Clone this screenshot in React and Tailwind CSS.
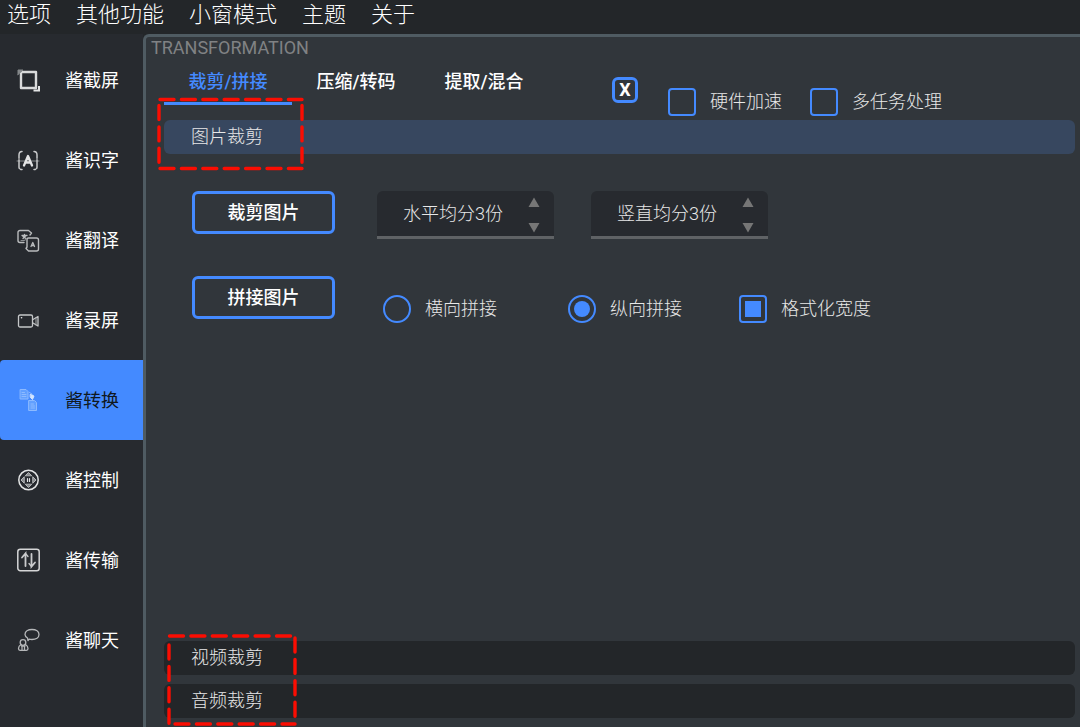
import { useState } from 'react';

const MENUS = ['选项', '其他功能', '小窗模式', '主题', '关于'];

function Icon({ children }) {
  return (
    <svg
      viewBox="0 0 24 24"
      className="size-6 shrink-0"
      fill="none"
      stroke="#e3e4e5"
      strokeWidth="1.5"
      strokeLinecap="round"
      strokeLinejoin="round"
      aria-hidden="true"
    >
      {children}
    </svg>
  );
}

const ScreenshotIcon = () => (
  <Icon>
    <rect x="5" y="4" width="15" height="16" strokeWidth="2.4" stroke="#d9dadb" />
    <path d="M2 6.500V2h5L2 6.500Z" stroke="#85888b" fill="#85888b" strokeWidth="1" />
    <path d="M17.500 22.500h5.500V18" strokeWidth="2" strokeLinecap="butt" strokeLinejoin="miter" />
  </Icon>
);

const OcrIcon = () => (
  <Icon>
    <path d="M1 13h22" stroke="#85888b" strokeWidth="1" />
    <path d="M6 3.500C4 3.500 3 4.500 3 7v12c0 1.500.8 2.500 3 2.500" strokeDasharray="8.500 1.500" stroke="#c9cacc" strokeWidth="1.500" />
    <path d="M18 3.500c2 0 3 1 3 3.500v12c0 1.500-.8 2.500-3 2.500" strokeDasharray="8.500 1.500" stroke="#c9cacc" strokeWidth="1.500" />
    <path d="M8 17.500 12 8l4 9.500M9.500 14.500h5" strokeWidth="2.300" />
  </Icon>
);

const TranslateIcon = () => (
  <Icon>
    <g strokeWidth="1.400" stroke="#b9bbbd">
      <path d="M8 14.500H4A2 2 0 0 1 2 12.500V4.500A2 2 0 0 1 4 2.500h8.500L15.500 5l-1.500 2" />
      <path d="M12.500 10h8a2 2 0 0 1 2 2v9a2 2 0 0 1-2 2h-8l-2.500-2.500 1-1.500v-7.500a1.500 1.500 0 0 1 1.500-1.500Z" />
      <path d="M6 7.500h5M8.500 6.500v1M7 10.500l3-3M7 8.500l3 2M15 18.500l1.800-4 1.700 4M16 17.500h1.500" strokeWidth="1.300" />
      <path d="M5 12.500h3.500M9 11.500l2.500 1.500" stroke="#8d9093" strokeWidth="1" />
    </g>
  </Icon>
);

const RecordIcon = () => (
  <Icon>
    <rect x="2.500" y="7" width="14" height="12" rx="1.500" stroke="#c5c7c9" strokeWidth="1.300" />
    <path d="m17 11.500 5-3v9.500L17 15" stroke="#c5c7c9" strokeWidth="1.300" />
    <path d="M20 9.500v7.500" stroke="#a9abad" strokeWidth="1" />
    <path d="M5.500 9.700h.1" strokeWidth="1.600" />
  </Icon>
);

const ConvertIcon = () => (
  <Icon>
    <g stroke="#8dbaff" strokeWidth="1">
      <path d="M4.500 1.500h5.500l2 2V11H4.500ZM6 4.500h2.500M6 6.500h4M6 8.500h4" fill="#62a0ff" />
      <path d="M13 12.500h5.500l2 2V22.500H13ZM15 16h2.500M15 18h3.500M15 20h3.500" fill="#62a0ff" />
      <path d="M13.500 4.500 16 6v2" />
      <path d="M14.500 6.500 18 8l-1.500 3.500-2-2Z" fill="#d3e5ff" stroke="#d3e5ff" />
    </g>
  </Icon>
);

const ControlIcon = () => (
  <Icon>
    <circle cx="12.500" cy="12" r="9.700" strokeWidth="1.500" />
    <path d="M9.500 7.500 12.500 4.500l3 3ZM9.500 16.500l3 3 3-3ZM8 9l-3 3L8 15ZM17 9l3 3-3 3Z" strokeWidth="1" stroke="#b5b7b9" fill="#898c8f" />
    <path d="M11.500 10.500v3M13.500 10.500v3" strokeWidth="1.200" />
  </Icon>
);

const TransferIcon = () => (
  <Icon>
    <rect x="1.800" y="1.300" width="21.400" height="21.400" rx="2.500" strokeWidth="1.500" stroke="#d5d6d7" />
    <path d="m6 9.500 3.500-4V18M19 14.500l-3.500 4V6" stroke="#c9cacc" strokeWidth="1.800" strokeLinejoin="miter" />
    <path d="m9.500 5.500 2.500 3M15.500 18.500l-2.500-3" stroke="#c9cacc" strokeWidth="1.300" />
  </Icon>
);

const ChatIcon = () => (
  <Icon>
    <g stroke="#b5b7b9" strokeWidth="1.300">
      <path d="M11.500 10c-1.500-1-2.500-2-2.500-3.500C9 3.500 12 1.500 16 1.500s7 2 7 5-3 5-7 5c-1 0-2-.100-2.800-.4L12 12.500Z" />
      <circle cx="7" cy="14.500" r="2.800" />
      <path d="M5 16.500c-1.500 1-2.500 2.500-2.500 4 0 1 .5 1.800 1.500 1.800h6.500c1 0 1.500-.8 1.500-1.800 0-1.500-1-3-2.500-4M6 19v2.500M8.500 19v2.500M5.500 18h3.500" />
    </g>
  </Icon>
);

const NAV = [
  { label: '酱截屏', icon: ScreenshotIcon },
  { label: '酱识字', icon: OcrIcon },
  { label: '酱翻译', icon: TranslateIcon },
  { label: '酱录屏', icon: RecordIcon },
  { label: '酱转换', icon: ConvertIcon },
  { label: '酱控制', icon: ControlIcon },
  { label: '酱传输', icon: TransferIcon },
  { label: '酱聊天', icon: ChatIcon },
];

const TABS = ['裁剪/拼接', '压缩/转码', '提取/混合'];

function CheckBox({ label, defaultChecked }) {
  return (
    <label className="flex items-center gap-3.5 whitespace-nowrap">
      <input
        type="checkbox"
        defaultChecked={defaultChecked}
        className="grid size-7 shrink-0 appearance-none place-items-center rounded border-2 border-[#448aff] before:size-4 before:bg-[#448aff] not-checked:before:hidden"
      />
      {label}
    </label>
  );
}

function Radio({ label, defaultChecked }) {
  return (
    <label className="flex items-center gap-3.5 whitespace-nowrap">
      <input
        type="radio"
        name="direction"
        defaultChecked={defaultChecked}
        className="grid size-7 shrink-0 appearance-none place-items-center rounded-full border-2 border-[#448aff] before:size-4 before:rounded-full before:bg-[#448aff] not-checked:before:hidden"
      />
      {label}
    </label>
  );
}

function SplitCount({ prefix }) {
  const [count, setCount] = useState(3);
  return (
    <div className="flex h-12 w-[177px] items-center rounded-t-md border-b-3 border-[#5f6265] bg-[#272a2f] pr-3 pl-[26px]">
      <input
        type="text"
        readOnly
        aria-label={prefix}
        value={`${prefix}${count}份`}
        className="w-0 grow bg-transparent outline-none"
      />
      <div className="flex flex-col gap-4 pt-0.5">
        <button type="button" aria-label="增加" className="block" onClick={() => setCount(count + 1)}>
          <svg viewBox="0 0 12 10" className="h-2.5 w-4 fill-[#767676]" aria-hidden="true">
            <path d="M6 0.500 11.500 10H0.500Z" />
          </svg>
        </button>
        <button type="button" aria-label="减少" className="block" onClick={() => setCount(Math.max(1, count - 1))}>
          <svg viewBox="0 0 12 10" className="h-2.5 w-4 fill-[#767676]" aria-hidden="true">
            <path d="M6 9.500 0.500 0h11Z" />
          </svg>
        </button>
      </div>
    </div>
  );
}

function ActionButton({ children }) {
  return (
    <button
      type="button"
      className="h-[43px] w-[143px] rounded-md border-3 border-[#448aff] font-medium text-white"
    >
      {children}
    </button>
  );
}

function SectionHeader({ children, open }) {
  return (
    <button
      type="button"
      aria-expanded={open}
      className={
        open
          ? 'block h-[34px] w-full rounded-md bg-[#37475f] pl-[27px] text-left'
          : 'block h-[34px] w-full rounded-md bg-[#232629] pl-[27px] text-left'
      }
    >
      {children}
    </button>
  );
}

export default function App() {
  return (
    <div className="flex min-h-screen flex-col bg-[#232629] font-['Roboto','Noto_Sans_CJK_SC',sans-serif] text-lg leading-6 font-light text-[#e8e8e8]">
      <nav className="flex h-[34px] items-start gap-[25px] px-[7px] text-[22px] leading-[30px] text-white">
        {MENUS.map((m) => (
          <button key={m} type="button" className="whitespace-nowrap">
            {m}
          </button>
        ))}
      </nav>

      <div className="flex grow">
        <aside className="flex w-[143px] shrink-0 flex-col bg-[#272a2f] pt-1.5">
          {NAV.map(({ label, icon: Glyph }) => {
            const active = label === '酱转换';
            return (
              <button
                key={label}
                type="button"
                aria-current={active ? 'page' : undefined}
                className={
                  active
                    ? 'flex h-20 items-center gap-[25px] rounded-l bg-[#448aff] pl-4 font-normal text-[#101820]'
                    : 'flex h-20 items-center gap-[25px] pl-4 font-normal text-white'
                }
              >
                <Glyph />
                <span className="pt-0.5">{label}</span>
              </button>
            );
          })}
        </aside>

        <main className="flex min-w-0 grow flex-col rounded-tl-md border-t-3 border-l-3 border-[#4f5b62] bg-[#31363b]">
          <h1 className="pt-px pl-[5px] font-normal leading-5 text-[#808284]">TRANSFORMATION</h1>

          <div className="flex h-[62px] pl-[18px]">
            <div role="tablist" className="flex h-[47px] shrink-0">
              {TABS.map((t, i) => (
                <button
                  key={t}
                  type="button"
                  role="tab"
                  aria-selected={i === 0}
                  className={
                    i === 0
                      ? 'w-32 border-b-3 border-[#448aff] pt-1 font-medium text-[#448aff]'
                      : 'w-32 border-b-3 border-transparent pt-1 font-medium text-white'
                  }
                >
                  {t}
                </button>
              ))}
            </div>
            <button
              type="button"
              aria-label="X"
              className="mt-[19px] ml-16 flex size-[26px] shrink-0 items-center justify-center rounded-md border-3 border-[#448aff] font-bold text-white"
            >
              X
            </button>
            <div className="mt-[30px] ml-[30px] flex h-7 gap-7">
              <CheckBox label="硬件加速" />
              <CheckBox label="多任务处理" />
            </div>
          </div>

          <div className="flex grow flex-col pr-[5px] pb-[9px] pl-[18px]">
            <div className="relative">
              <SectionHeader open>图片裁剪</SectionHeader>
              <svg
                viewBox="0 0 148 76"
                className="pointer-events-none absolute -top-6 -left-2 h-[76px] w-[148px]"
                stroke="#fb0d02"
                strokeWidth="3.4"
                strokeLinecap="round"
                strokeDasharray="14 7.4"
                fill="none"
                aria-hidden="true"
              >
                <path d="M4 3.500H146" />
                <path d="M146 9.500V70" />
                <path d="M3 9.500V70" />
                <path d="M4 72.500H146" />
              </svg>
            </div>

            <section className="grow px-7 pt-[37px] pb-10">
              <div className="flex">
                <ActionButton>裁剪图片</ActionButton>
                <div className="ml-[42px] flex gap-[37px]">
                  <SplitCount prefix="水平均分" />
                  <SplitCount prefix="竖直均分" />
                </div>
              </div>
              <div className="mt-[37px] flex items-start">
                <ActionButton>拼接图片</ActionButton>
                <div className="mt-[19px] ml-12 flex">
                  <Radio label="横向拼接" />
                  <div className="ml-[71px]">
                    <Radio label="纵向拼接" defaultChecked />
                  </div>
                  <div className="ml-[57px]">
                    <CheckBox label="格式化宽度" defaultChecked />
                  </div>
                </div>
              </div>
            </section>

            <div className="relative flex flex-col gap-[9px]">
              <SectionHeader>视频裁剪</SectionHeader>
              <SectionHeader>音频裁剪</SectionHeader>
              <svg
                viewBox="0 0 134 94"
                className="pointer-events-none absolute -top-2 left-0 h-[94px] w-[134px]"
                stroke="#fb0d02"
                strokeWidth="3.4"
                strokeLinecap="round"
                strokeDasharray="14 7.4"
                fill="none"
                aria-hidden="true"
              >
                <path d="M5.500 3H128" />
                <path d="M131 5V88" />
                <path d="M5 12V91" />
                <path d="M11 91H131" />
              </svg>
            </div>
          </div>
        </main>
      </div>
    </div>
  );
}
